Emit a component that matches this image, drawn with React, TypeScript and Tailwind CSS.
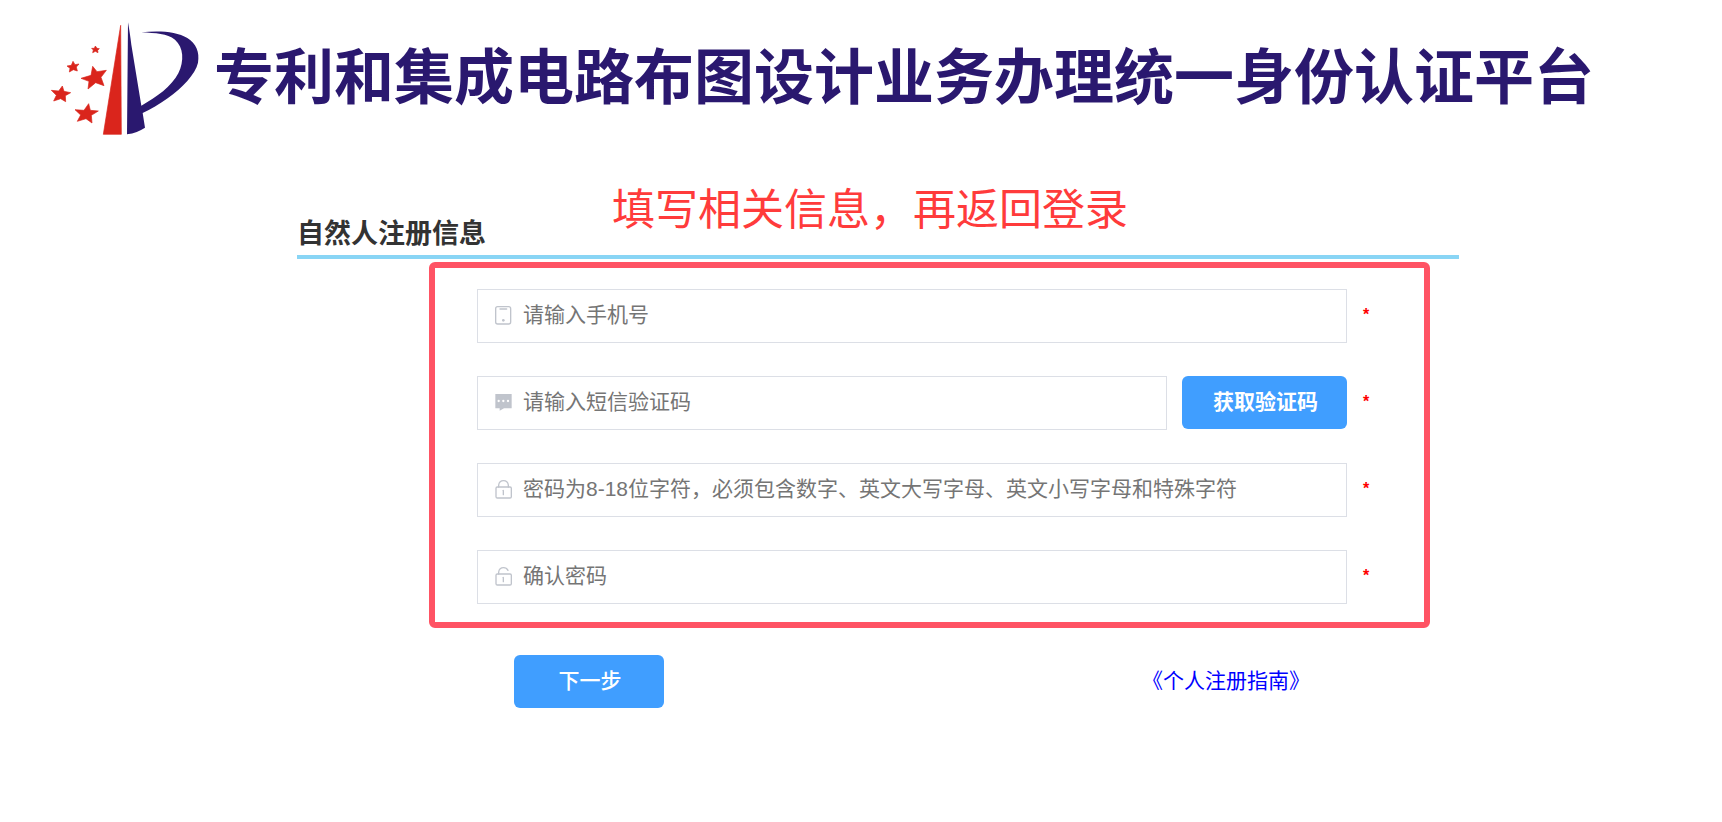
import type { ReactNode } from 'react';

function Logo() {
  return (
    <svg viewBox="0 0 600 420" className="h-[140px] w-[200px] shrink-0" role="img" aria-label="标志">
      <g fill="#da251c" stroke="#da251c" strokeWidth="2" strokeLinejoin="round">
        <path d="M272 46 L274 373 L220 373 Z" />
        <path d="M188 169 L201 185 L229 181 L213 202 L222 227 L197 218 L174 237 L177 214 L153 205 L183 196 Z" />
        <path d="M176 281 L181 301 L205 303 L184 316 L186 339 L168 326 L142 334 L152 315 L135 299 L162 301 Z" />
        <path d="M97 228 L102 244 L122 248 L106 257 L107 275 L92 266 L71 273 L79 256 L64 241 L86 243 Z" />
        <path d="M129 154 L135 164 L147 162 L139 171 L142 183 L130 179 L118 186 L120 175 L111 168 L124 166 Z" />
        <path d="M196 108 L201 115 L208 116 L203 121 L204 128 L196 124 L188 128 L190 120 L185 115 L193 115 Z" />
      </g>
      <g fill="#2a186f">
        <path d="M294 37 C298 60 301 80 304 104 L334 287 C380 262 425 229 445 190 C463 152 461 112 435 89 C411 70 378 70 334 67 C385 61 440 64 472 84 C499 101 509 126 504 158 C496 193 457 233 413 265 C388 283 362 298 338 309 L345 353 C330 363 312 370 291 373 Z" />
      </g>
    </svg>
  );
}

function Icon({ children }: { children: ReactNode }) {
  return (
    <svg
      viewBox="0 0 54 66"
      className="h-[22px] w-[18px] shrink-0"
      fill="none"
      stroke="#c0c4cc"
      strokeWidth="4"
      strokeLinecap="round"
      strokeLinejoin="round"
      aria-hidden="true"
    >
      {children}
    </svg>
  );
}

const phoneIcon = (
  <Icon>
    <rect x="5" y="5" width="45" height="52" rx="6" />
    <path d="M18 12H38" />
    <circle cx="28" cy="46" r="4" fill="#c0c4cc" stroke="none" />
  </Icon>
);

const messageIcon = (
  <Icon>
    <path
      d="M4 6H53V49H30L17 56V49H4Z"
      fill="#c0c4cc"
      stroke="none"
    />
    <g fill="#fff" stroke="none">
      <circle cx="14" cy="27" r="3.5" />
      <circle cx="28" cy="27" r="3.5" />
      <circle cx="42" cy="27" r="3.5" />
    </g>
  </Icon>
);

const lockIcon = (
  <Icon>
    <rect x="6" y="24" width="46" height="33" rx="4" />
    <path d="M14 24V18Q16 5 28.500 5Q41 5 43 18V24" />
    <path d="M28 34V47" />
  </Icon>
);

const unlockIcon = (
  <Icon>
    <rect x="6" y="24" width="46" height="33" rx="4" />
    <path d="M14 24V18Q16 5 28.500 5Q38 5 42 13" />
    <path d="M28 34V47" />
  </Icon>
);

type FieldProps = {
  id: string;
  label: string;
  type?: string;
  icon: ReactNode;
  action?: ReactNode;
};

function Field({ id, label, type = 'text', icon, action }: FieldProps) {
  return (
    <div className="flex items-center">
      <div className="flex min-w-0 flex-1 gap-[15px]">
        <div className="flex h-[54px] min-w-0 flex-1 items-center gap-[11px] border border-[#dcdfe6] bg-white pl-4">
          {icon}
          <input
            id={id}
            type={type}
            placeholder={label}
            aria-label={label}
            className="h-full min-w-0 flex-1 bg-transparent pb-[2px] text-[21px] text-[#606266] outline-none placeholder:text-[#757575]"
          />
        </div>
        {action}
      </div>
      <span className="w-[35px] shrink-0 pb-[2px] pl-4 text-base leading-6 font-bold text-[#ff0000]">*</span>
    </div>
  );
}

export default function App() {
  return (
    <div className="min-h-screen bg-white font-['Liberation_Sans','Noto_Sans_CJK_SC',sans-serif]">
      <header className="flex items-center pt-[10px] pl-[30px]">
        <Logo />
        <h1 className="-ml-4 pb-[2px] text-[60px] leading-[80px] font-bold whitespace-nowrap text-[#2a186f]">
          专利和集成电路布图设计业务办理统一身份认证平台
        </h1>
      </header>

      <main className="relative pt-16 pr-[263px] pl-[297px]">
        <p className="absolute top-[28px] left-[612px] text-[43px] leading-[64px] font-normal whitespace-nowrap text-[#ff3b3b]">
          填写相关信息，再返回登录
        </p>
        <h2 className="border-b-4 border-[#89d5f5] text-[27px] leading-[41px] font-bold text-[#333]">
          自然人注册信息
        </h2>

        <form onSubmit={(event) => event.preventDefault()}>
          <div className="mt-[3px] mr-[29px] ml-[132px] flex flex-col gap-[33px] rounded-md border-6 border-[#ff5364] pt-[21px] pr-[42px] pb-[18px] pl-[42px]">
            <Field id="phone" label="请输入手机号" type="tel" icon={phoneIcon} />
            <Field
              id="code"
              label="请输入短信验证码"
              icon={messageIcon}
              action={
                <button
                  type="button"
                  className="h-[53px] w-[165px] shrink-0 rounded-md bg-[#409eff] pb-[2px] pl-[2px] text-[21px] font-bold text-white"
                >
                  获取验证码
                </button>
              }
            />
            <Field
              id="password"
              label="密码为8-18位字符，必须包含数字、英文大写字母、英文小写字母和特殊字符"
              type="password"
              icon={lockIcon}
            />
            <Field id="confirm" label="确认密码" type="password" icon={unlockIcon} />
          </div>

          <div className="mt-[27px] flex items-center justify-between pr-[149px] pl-[217px]">
            <button
              type="submit"
              className="h-[53px] w-[150px] rounded-md bg-[#409eff] pb-[2px] pl-[2px] text-[21px] font-medium text-white"
            >
              下一步
            </button>
            <a href="#guide" className="pb-[2px] text-[21px] text-[#0000ff]">
              《个人注册指南》
            </a>
          </div>
        </form>
      </main>
    </div>
  );
}
